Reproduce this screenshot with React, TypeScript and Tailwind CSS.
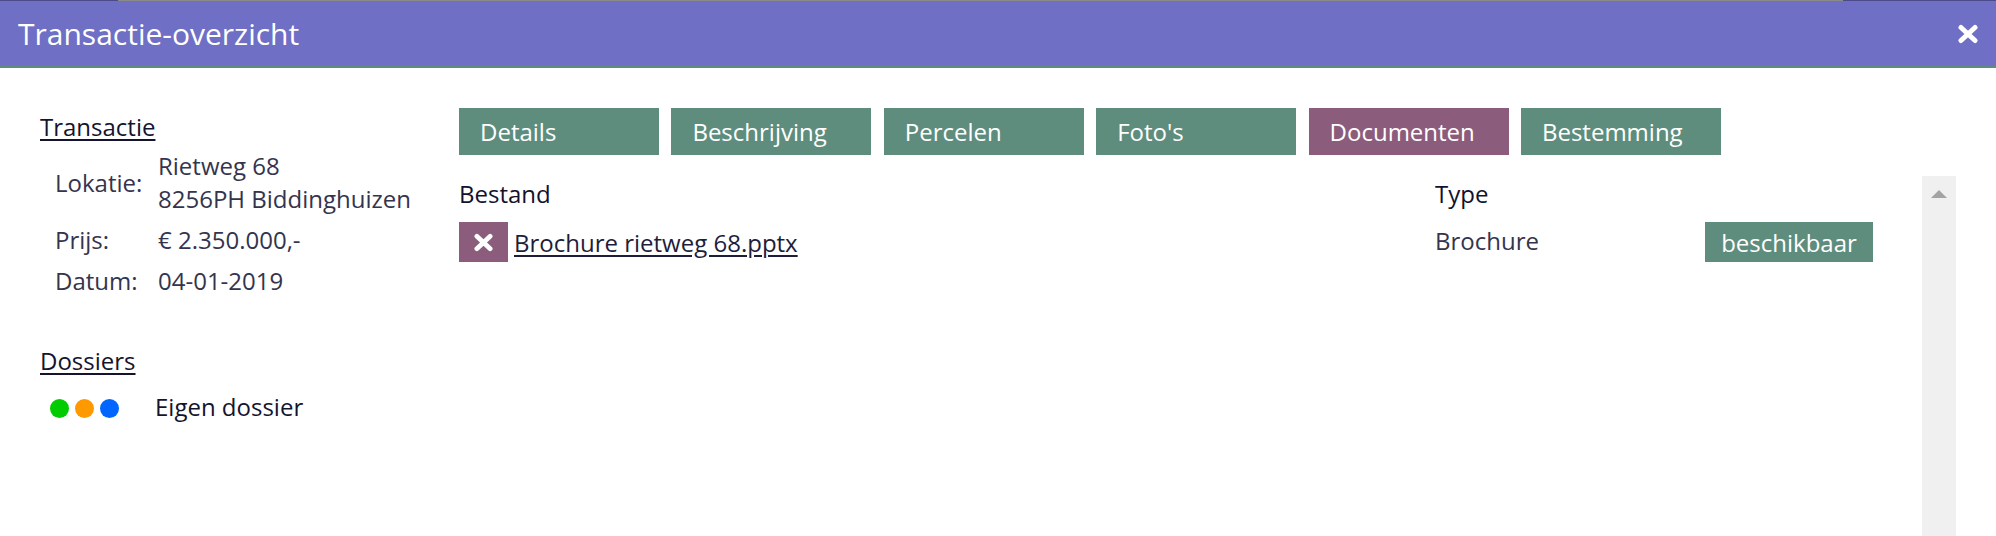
import React from "react";

const tabs = [
  { label: "Details", active: false },
  { label: "Beschrijving", active: false },
  { label: "Percelen", active: false },
  { label: "Foto's", active: false },
  { label: "Documenten", active: true },
  { label: "Bestemming", active: false },
];

const info = [
  { label: "Lokatie:", value: ["Rietweg 68", "8256PH Biddinghuizen"] },
  { label: "Prijs:", value: ["€ 2.350.000,-"] },
  { label: "Datum:", value: ["04-01-2019"] },
];

function BoldX({ className }: { className?: string }) {
  return (
    <svg viewBox="0 0 22 20" className={className} fill="none">
      <path d="M4 3.5 L18 16.5 M18 3.5 L4 16.5" stroke="white" strokeWidth="5" strokeLinecap="round" />
    </svg>
  );
}

export default function App() {
  return (
    <div className="w-full h-[536px] overflow-hidden bg-white font-['Open_Sans',sans-serif] flex flex-col">
      {/* page behind the modal */}
      <div className="h-px flex shrink-0">
        <div className="w-[118px] bg-[#4b4b8b]" />
        <div className="flex-1 bg-[#8a8a8a]" />
        <div className="w-[153px] bg-[#4b4b8b]" />
      </div>

      <div className="h-[65px] shrink-0 bg-[#6e6fc5] flex items-center justify-between pl-[18px] pr-[17px]">
        <h1 className="text-[30px] text-white leading-normal">Transactie-overzicht</h1>
        <button className="w-[22px] h-[20px]">
          <BoldX className="w-[22px] h-[20px]" />
        </button>
      </div>
      <div className="h-[2px] shrink-0 bg-[#5e8d7d]" />

      <div className="flex-1 flex pt-[40px] min-h-0">
        {/* left column */}
        <div className="w-[459px] shrink-0 pl-[40px] text-[24px] leading-[33px]">
          <h2 className="mt-[2px] text-[#14142e] underline underline-offset-[3px] decoration-[2px]">Transactie</h2>
          <div className="mt-[2px] pl-[15px]">
            {info.map((row) => (
              <div key={row.label} className="grid grid-cols-[103px_1fr] items-center py-[4px]">
                <span className="text-[#34344e]">{row.label}</span>
                <div className="text-[#34344e]">
                  {row.value.map((v) => (
                    <div key={v}>{v}</div>
                  ))}
                </div>
              </div>
            ))}
          </div>

          <h2 className="mt-[43px] text-[#14142e] underline underline-offset-[3px] decoration-[2px]">Dossiers</h2>
          <div className="mt-[13px] flex items-center">
            <div className="ml-[10px] flex gap-[6px] mt-[3px]">
              <span className="w-[19px] h-[19px] rounded-full bg-[#00cc00]" />
              <span className="w-[19px] h-[19px] rounded-full bg-[#ff9900]" />
              <span className="w-[19px] h-[19px] rounded-full bg-[#0066ff]" />
            </div>
            <span className="ml-[36px] text-[#14142e]">Eigen dossier</span>
          </div>
        </div>

        {/* right column */}
        <div className="flex-1 flex flex-col pr-[40px] min-h-0">
          <div className="flex gap-[12.4px] h-[47px] shrink-0">
            {tabs.map((t) => (
              <button
                key={t.label}
                className={`w-[200px] h-[47px] pl-[21px] text-left text-[24px] leading-[33px] text-white ${
                  t.active ? "bg-[#8c5c7c]" : "bg-[#5e8d7d]"
                }`}
              >
                {t.label}
              </button>
            ))}
          </div>

          <div className="mt-[21px] flex-1 flex min-h-0">
            <div className="flex-1 text-[24px] leading-[33px] pt-[1px]">
              <div className="grid grid-cols-[976px_270px_168px]">
                <div className="text-[#12122e]">Bestand</div>
                <div className="text-[#12122e]">Type</div>
                <div />
              </div>
              <div className="mt-[12px] grid grid-cols-[976px_270px_168px] items-center h-[40px]">
                <div className="flex items-center gap-[6px]">
                  <button className="w-[49px] h-[40px] bg-[#8c5c7c] flex items-center justify-center">
                    <BoldX className="w-[21px] h-[19px]" />
                  </button>
                  <a href="#" className="text-[#1e1e3a] underline underline-offset-[3px]">
                    Brochure rietweg 68.pptx
                  </a>
                </div>
                <div className="text-[#34344e] -mt-[3px]">Brochure</div>
                <div className="h-[40px] bg-[#5e8d7d] text-white flex items-center justify-center">beschikbaar</div>
              </div>
            </div>

            {/* scrollbar */}
            <div className="w-[34px] bg-[#f0f0f0] flex justify-center pt-[14px]">
              <div className="w-0 h-0 border-l-[8px] border-r-[8px] border-b-[8px] border-l-transparent border-r-transparent border-b-[#a3a3a3]" />
            </div>
          </div>
        </div>
      </div>
    </div>
  );
}
